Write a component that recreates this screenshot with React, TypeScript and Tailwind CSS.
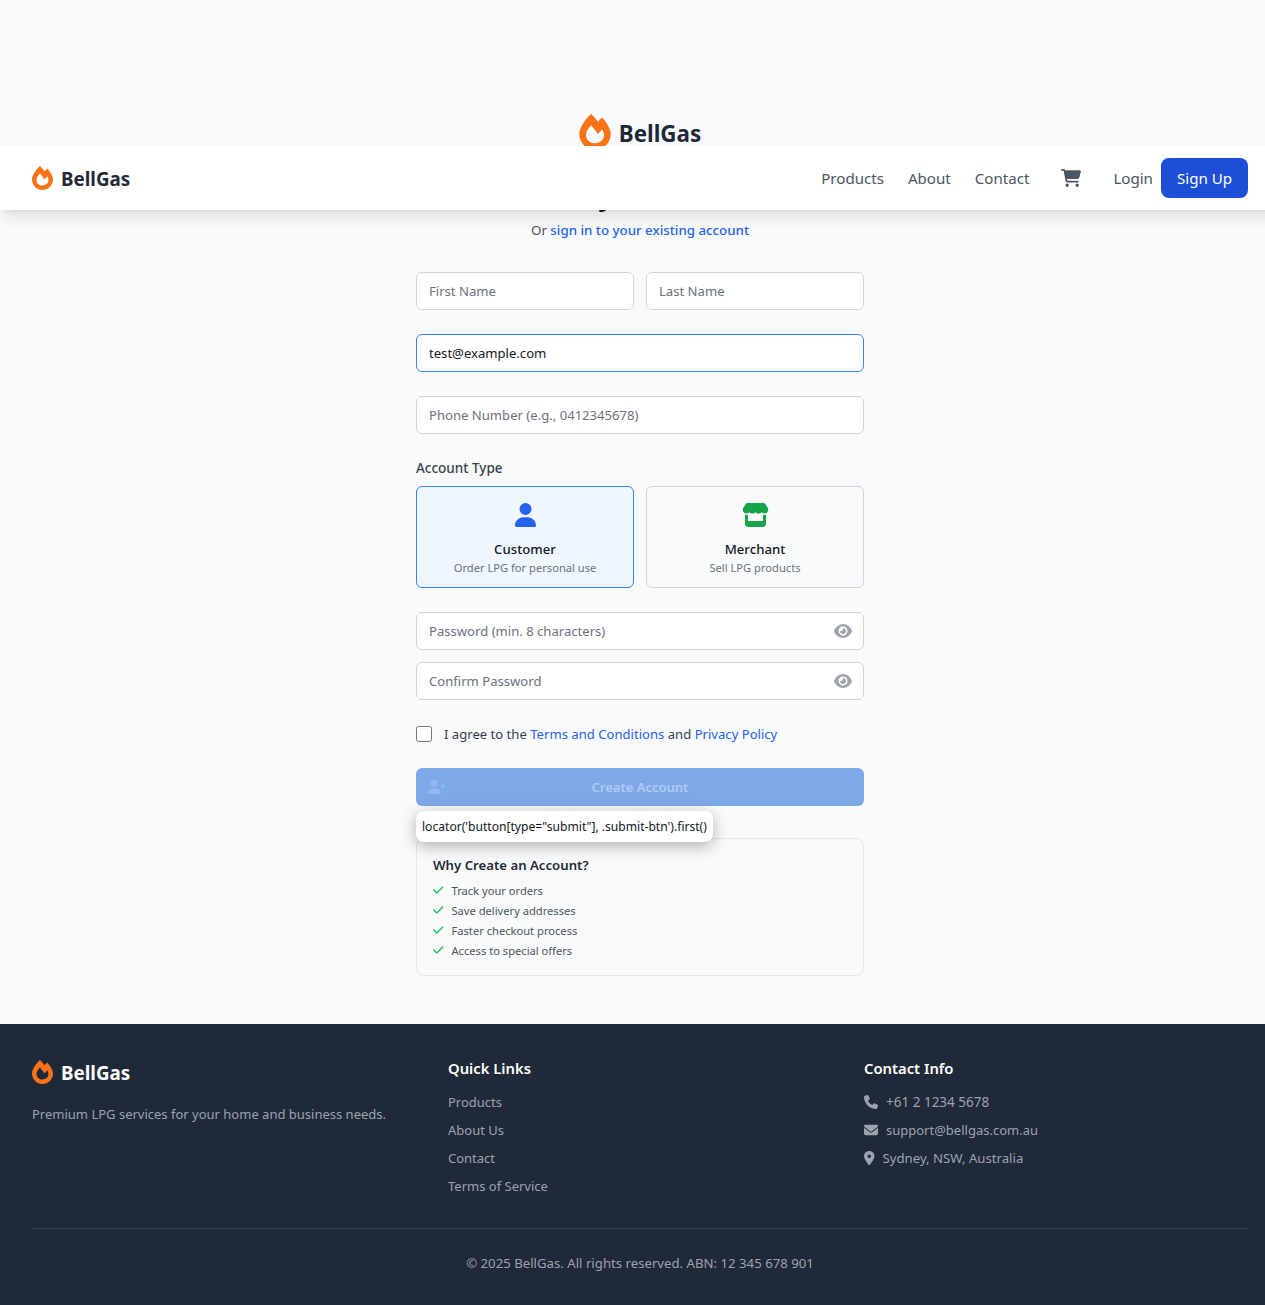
import { FaFireAlt } from 'react-icons/fa';
import { FaCartShopping, FaCheck, FaEnvelope, FaEye, FaLocationDot, FaPhone, FaStore, FaUser, FaUserPlus } from 'react-icons/fa6';

const benefits = ['Track your orders', 'Save delivery addresses', 'Faster checkout process', 'Access to special offers'];
const quickLinks = ['Products', 'About Us', 'Contact', 'Terms of Service'];

function Field({ placeholder, half, eye }: { placeholder: string; half?: boolean; eye?: boolean }) {
    return (
        <div className={half ? 'relative w-[218px]' : 'relative w-full'}>
            <input
                type="text"
                placeholder={placeholder}
                className="w-full h-[38px] px-3 bg-white border border-[#d1d5db] rounded-md text-[13.1px] text-[#111827] placeholder:text-[#6b7280] outline-none"
            />
            {eye && <FaEye className="absolute right-3 top-[11px] w-[18px] h-4 text-[#9ca3af]" />}
        </div>
    );
}

function TypeCard({ icon, title, text, active }: { icon: React.ReactNode; title: string; text: string; active?: boolean }) {
    return (
        <div className={active ? 'p-3 text-center rounded-md border border-[#3b82f6] bg-[#eff6ff]' : 'p-3 text-center rounded-md border border-[#d1d5db]'}>
            <div className="h-8 mb-2 flex items-center justify-center">{icon}</div>
            <div className="text-[13.2px] leading-5 font-medium text-[#111827]">{title}</div>
            <div className="pt-px -mb-px text-[11.15px] leading-4 text-[#6b7280]">{text}</div>
        </div>
    );
}

export default function App() {
    return (
        <div className="overflow-hidden font-['Noto_Sans',sans-serif]">
            <div className="relative w-[1280px] bg-[#f9fafb]">
                <header className="absolute top-[146px] left-0 right-0 z-10 h-16 px-8 flex items-center justify-between bg-white shadow-lg">
                    <div className="flex items-center gap-2">
                        <FaFireAlt className="w-[21px] h-6 text-[#f97316]" />
                        <span className="pt-0.5 text-[18.8px] leading-7 font-bold text-[#1f2937]">BellGas</span>
                    </div>
                    <div className="flex items-center text-[15.1px] leading-6">
                        <nav className="flex items-center gap-6 text-[#4b5563]">
                            <a href="#">Products</a>
                            <a href="#">About</a>
                            <a href="#">Contact</a>
                        </nav>
                        <FaCartShopping className="mx-8 w-5 h-[18px] text-[#4b5563]" />
                        <a href="#" className="mr-2 text-[#4b5563]">Login</a>
                        <a href="#" className="px-4 py-2 rounded-lg bg-[#1d4ed8] text-white">Sign Up</a>
                    </div>
                </header>

                <main className="pt-[114px] pb-12">
                    <div className="w-[448px] mx-auto relative">
                        <div className="h-9 flex items-center justify-center gap-2">
                            <FaFireAlt className="w-8 h-9 text-[#f97316]" />
                            <span className="pt-1 text-[22.4px] leading-8 font-bold text-[#1f2937]">BellGas</span>
                        </div>
                        <h2 className="mt-[26px] text-[28px] leading-9 font-bold text-center text-[#111827]">Create your account</h2>
                        <p className="mt-2 text-[13.3px] leading-5 text-center text-[#4b5563]">
                            Or{' '}
                            <a href="#" className="font-medium text-[#2563eb]">sign in to your existing account</a>
                        </p>

                        <form className="mt-8 space-y-6">
                            <div className="flex justify-between">
                                <Field placeholder="First Name" half />
                                <Field placeholder="Last Name" half />
                            </div>
                            <input
                                type="email"
                                defaultValue="test@example.com"
                                className="w-full h-[38px] px-3 bg-white border border-[#3b82f6] rounded-md text-[13.1px] text-[#111827] outline-none"
                            />
                            <Field placeholder="Phone Number (e.g., 0412345678)" />
                            <div>
                                <div className="text-[13.5px] leading-5 font-medium text-[#374151]">Account Type</div>
                                <div className="mt-2 grid grid-cols-2 gap-3">
                                    <TypeCard active icon={<FaUser className="w-[21px] h-6 text-[#2563eb]" />} title="Customer" text="Order LPG for personal use" />
                                    <TypeCard icon={<FaStore className="w-[27px] h-6 text-[#16a34a]" />} title="Merchant" text="Sell LPG products" />
                                </div>
                            </div>
                            <div className="space-y-3">
                                <Field placeholder="Password (min. 8 characters)" eye />
                                <Field placeholder="Confirm Password" eye />
                            </div>
                            <label className="flex items-center h-5 text-[13.1px] text-[#374151]">
                                <input type="checkbox" className="w-4 h-4" />
                                <span className="ml-3 pt-px">
                                    I agree to the <a href="#" className="text-[#2563eb]">Terms and Conditions</a> and <a href="#" className="text-[#2563eb]">Privacy Policy</a>
                                </span>
                            </label>
                            <button type="button" className="relative w-full h-[38px] pt-px rounded-md bg-[#7ea9e8] text-[13px] font-semibold text-[#b0caf2]">
                                <FaUserPlus className="absolute left-3 top-[12px] w-[18px] h-[14px] text-[#94b9ed]" />
                                Create Account
                            </button>
                        </form>

                        <div className="mt-8 p-4 rounded-lg border border-[#e5e7eb] bg-[#f9fafb]">
                            <h3 className="text-[13.2px] leading-5 font-semibold text-[#1f2937] mb-2">Why Create an Account?</h3>
                            <ul className="space-y-1 text-[11.15px] text-[#4b5563]">
                                {benefits.map((item) => (
                                    <li key={item} className="flex items-center h-4 pt-px">
                                        <FaCheck className="mr-2 mb-[4px] w-[10.5px] h-3 text-[#22c55e]" />
                                        {item}
                                    </li>
                                ))}
                            </ul>
                        </div>

                        <div className="absolute left-0 top-[697px] h-[31px] pt-0.5 px-1.5 flex items-center rounded-lg bg-white text-[12.1px] text-[#111827] whitespace-nowrap shadow-[0_4px_16px_rgba(0,0,0,0.3)]">
                            locator('button[type="submit"], .submit-btn').first()
                        </div>
                    </div>
                </main>

                <footer className="px-8 pt-8 pb-8 bg-[#1f2937]">
                    <div className="grid grid-cols-3 gap-8">
                        <div>
                            <div className="h-8 mb-4 flex items-center gap-2">
                                <FaFireAlt className="w-[21px] h-6 text-[#f97316]" />
                                <span className="pt-0.5 text-[18.8px] leading-7 font-bold text-white">BellGas</span>
                            </div>
                            <p className="text-[13px] leading-5 text-[#9ca3af]">Premium LPG services for your home and business needs.</p>
                        </div>
                        <div>
                            <h4 className="mb-3 text-[14.8px] leading-6 font-semibold text-white">Quick Links</h4>
                            <ul className="space-y-2 text-[13px] leading-5 text-[#9ca3af]">
                                {quickLinks.map((item) => (
                                    <li key={item}>{item}</li>
                                ))}
                            </ul>
                        </div>
                        <div>
                            <h4 className="mb-3 text-[14.8px] leading-6 font-semibold text-white">Contact Info</h4>
                            <ul className="space-y-2 text-[13px] leading-5 text-[#9ca3af]">
                                <li className="flex items-center gap-2 text-[13.5px]"><FaPhone className="w-3.5 h-3.5" />+61 2 1234 5678</li>
                                <li className="flex items-center gap-2"><FaEnvelope className="w-3.5 h-3.5" />support@bellgas.com.au</li>
                                <li className="flex items-center gap-2 text-[13.2px]"><FaLocationDot className="w-[10.5px] h-3.5" />Sydney, NSW, Australia</li>
                            </ul>
                        </div>
                    </div>
                    <div className="mt-8 pt-6 border-t border-[#374151] text-center text-[13.2px] leading-5 text-[#9ca3af]">
                        © 2025 BellGas. All rights reserved. ABN: 12 345 678 901
                    </div>
                </footer>
            </div>
        </div>
    );
}
